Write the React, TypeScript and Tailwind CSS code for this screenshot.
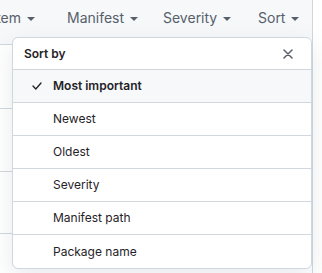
import React from "react";

const tabs = [
  { label: "Manifest", w: "w-[96px]" },
  { label: "Severity", w: "w-[95px]" },
  { label: "Sort", w: "w-[50px]" },
];
const options = ["Most important", "Newest", "Oldest", "Severity", "Manifest path", "Package name"];

const Caret = () => (
  <svg width="8" height="4" viewBox="0 0 8 4" className="mt-[2px] shrink-0">
    <path d="M0 0h8L4 4z" fill="#57606a" />
  </svg>
);

export default function App() {
  return (
    <div className="relative h-[273px] w-[322px] overflow-hidden bg-white font-['Inter',sans-serif] text-[#1f2328]">
      <div className="h-full w-[313px] border-r border-[#d0d7de]">
        <div className="flex h-[45px] items-start border-b border-[#d0d7de] bg-[#f6f8fa] pt-[8px] text-[14px] leading-[20px] text-[#57606a]">
          <div className="flex w-[67px] items-center justify-end gap-[6px] whitespace-nowrap pr-[32px]">
            <span>Ecosystem</span>
            <Caret />
          </div>
          {tabs.map((t) => (
            <div key={t.label} className={"flex items-center gap-[6px] whitespace-nowrap " + t.w}>
              <span>{t.label}</span>
              <Caret />
            </div>
          ))}
        </div>
        <div className="h-[64px] border-b border-[#d0d7de]" />
        <div className="h-[63px] border-b border-[#d0d7de]" />
        <div className="h-[62px] border-b border-[#d0d7de]" />
      </div>

      <div className="absolute left-[12px] top-[37px] w-[300px] overflow-hidden rounded-[6px] border border-[#d0d7de] bg-white shadow-[0_8px_24px_rgba(140,149,159,0.2)]">
        <div className="flex h-[32px] items-center justify-between border-b border-[#d0d7de] pl-[11px] pr-[18px]">
          <span className="text-[12px] font-semibold">Sort by</span>
          <svg width="10" height="10" viewBox="0 0 10 10">
            <path d="M1 1l8 8M9 1l-8 8" stroke="#57606a" strokeWidth="1.5" strokeLinecap="round" />
          </svg>
        </div>
        {options.map((o, i) => (
          <div
            key={o}
            className={
              "flex h-[33px] items-center text-[12px] " +
              (i < options.length - 1 ? "border-b border-[#d0d7de] " : "") +
              (i === 0 ? "bg-[#f6f8fa] font-semibold" : "")
            }
          >
            <div className="flex w-[40px] justify-end pr-[11px]">
              {i === 0 && (
                <svg width="10" height="8" viewBox="0 0 10 8">
                  <path d="M1 4l2.8 3L9 1" stroke="#1f2328" strokeWidth="1.3" fill="none" strokeLinecap="round" strokeLinejoin="round" />
                </svg>
              )}
            </div>
            <span>{o}</span>
          </div>
        ))}
      </div>
    </div>
  );
}
